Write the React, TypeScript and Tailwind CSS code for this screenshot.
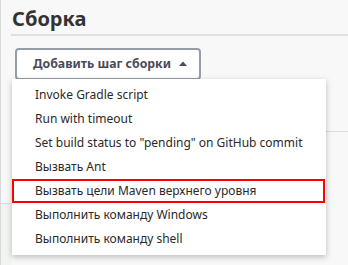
import { Fragment } from 'react'

const steps = [
  'Invoke Gradle script',
  'Run with timeout',
  'Set build status to "pending" on GitHub commit',
  'Вызвать Ant',
  'Вызвать цели Maven верхнего уровня',
  'Выполнить команду Windows',
  'Выполнить команду shell',
]

const HIGHLIGHT = 4

export default function App() {
  return (
    <div
      className="relative h-[265px] w-[348px] overflow-hidden bg-[#f8f8f8] text-[#333]"
      style={{ fontFamily: '"Noto Sans", "Open Sans", sans-serif' }}
    >
      <div className="flex h-full">
        <div className="flex w-[11px] shrink-0 flex-col border-l border-[#d9d9d9]">
          <div className="h-[203px]" />
          <div className="flex-1 border-t border-[#dcdcdc] bg-[#f1f4f1]" />
        </div>
        <div className="flex flex-1 flex-col">
          <h2 className="pt-[5px] pl-px text-[20px] leading-[28px] font-bold text-[#333]">Сборка</h2>
          <div className="mt-[1px] h-[2px] bg-[#e0e0e0]" />
          <div className="pt-[12px] pl-[4px]">
            <button className="flex h-[32px] w-[186px] items-center gap-[8px] rounded-[4px] border-2 border-[#959da6] bg-white pl-[16px] text-[12.3px] font-bold text-[#4a4a58]">
              <span>Добавить шаг сборки</span>
              <svg width="8" height="5" viewBox="0 0 8 5" className="mb-px">
                <path d="M0 5 L4 0.5 L8 5 Z" fill="#4a4a58" />
              </svg>
            </button>
          </div>
          <div className="mt-[51px] ml-[315px] h-px bg-[#dcdcdc]" />
        </div>
      </div>

      <ul className="absolute top-[79px] left-[12px] w-[314px] bg-white py-[4px] text-[12px] text-[#2a2a2a] shadow-[0_2px_6px_rgba(0,0,0,0.25)]">
        {steps.map((s, i) => (
          <Fragment key={s}>
            <li
              className={
                i === HIGHLIGHT
                  ? 'mr-px flex h-[24px] items-center border-2 border-[#ff0000] pl-[21px]'
                  : 'flex h-[24px] items-center pl-[23px]'
              }
            >
              {s}
            </li>
          </Fragment>
        ))}
      </ul>
    </div>
  )
}
